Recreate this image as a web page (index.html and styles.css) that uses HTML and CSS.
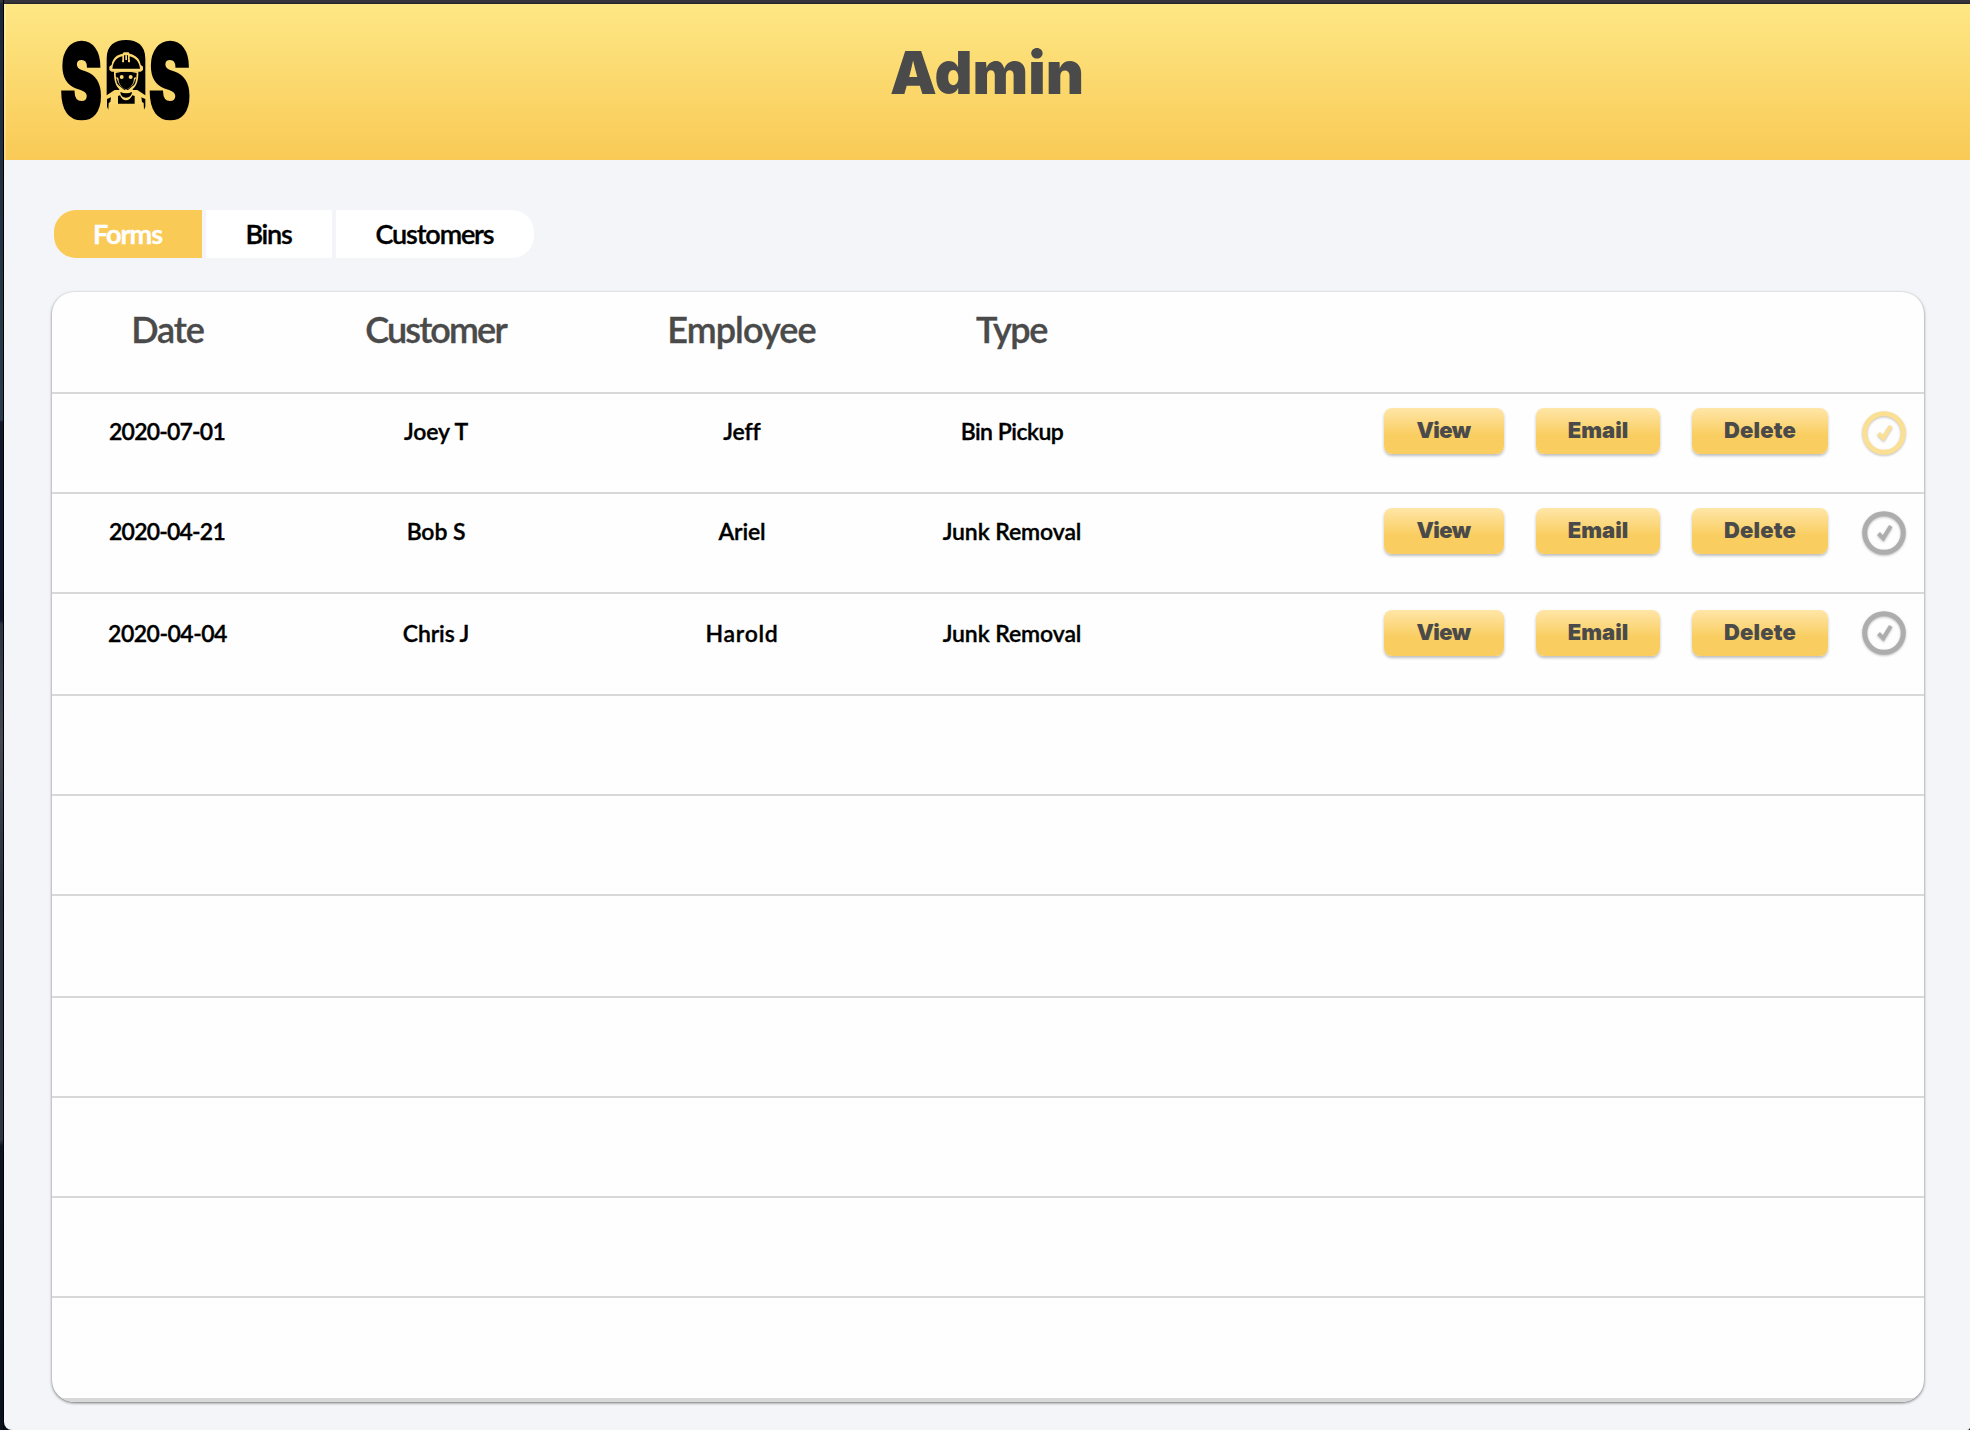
FILE: index.html
```
<!DOCTYPE html>
<html lang="en">
<head>
<meta charset="utf-8">
<title>Admin</title>
<link rel="stylesheet" href="styles.css">
</head>
<body>
<svg class="defs" aria-hidden="true">
  <symbol id="check" viewBox="0 0 44 44">
    <circle cx="22" cy="22" r="19.3" fill="none" stroke="currentColor" stroke-width="5"/>
    <path d="M16.5 22.5 L21.3 27.3 L28.8 15" fill="none" stroke="currentColor" stroke-width="4"/>
  </symbol>
</svg>
<div class="app">
  <header class="header">
    <svg class="logo" viewBox="0 0 420 276" role="img" aria-label="SOS">
      <g class="logo-letters">
        <text transform="translate(13 251) scale(.61 1)">S</text>
        <text transform="translate(278 251) scale(.61 1)">S</text>
      </g>
      <path d="M152 184V74C152 34 176 18 210 18S268 34 268 74V184L244 168H176Z"/>
      <path class="gold" d="M174 112C173 142 181 158 190 166V174L152 188L161 210H259L268 188L230 174V166C240 158 248 142 247 112Z"/>
      <path d="M179 117Q210 109 242 117C241 136 239 148 233 154L216 168H205L188 154C181 148 180 136 179 117Z"/>
      <path class="gold-line" d="M181 132Q186 131 188 142Q193 157 210 165Q228 157 233 142Q235 131 240 132"/>
      <path d="M188 117H233V141C230 153 221 164 210 166C199 164 191 153 188 141Z"/>
      <path class="gold" d="M160 108V98L167 92C170 71 183 62 200 59L203 55H218L221 59C239 63 251 73 254 92L261 98V108L254 113H167Z"/>
      <path d="M169 104C172 80 184 70 199 67V84H204V64H216V84H221V67C238 71 250 83 252 104Z"/>
      <path class="gold" d="M208 64H213V78H208ZM199 78H204V85H199ZM217 78H222V85H217Z"/>
      <circle class="gold" cx="197" cy="129" r="6"/>
      <circle class="gold" cx="224" cy="129" r="6"/>
      <path d="M193 174Q210 182 228 174C227 186 219 191 210 191S194 186 193 174Z"/>
      <path d="M186 186L192 184Q198 199 210 199T229 184L236 186V209H186Z"/>
      <path d="M153 195L165 190L163 204L158 207L157 227L153 218ZM268 195L256 190L258 204L263 207L264 227L268 218Z"/>
    </svg>
    <h1 class="title">Admin</h1>
  </header>

  <main class="main">
    <nav class="tabs">
      <a class="tab tab-forms active">Forms</a>
      <a class="tab tab-bins">Bins</a>
      <a class="tab tab-customers">Customers</a>
    </nav>

    <section class="card">
      <div class="row head">
        <span class="cell t-date">Date</span>
        <span class="cell t-customer">Customer</span>
        <span class="cell t-employee">Employee</span>
        <span class="cell t-type">Type</span>
      </div>
      <div class="row">
        <span class="cell date">2020-07-01</span>
        <span class="cell">Joey T</span>
        <span class="cell">Jeff</span>
        <span class="cell pickup">Bin Pickup</span>
        <div class="actions">
          <button class="btn view">View</button>
          <button class="btn email">Email</button>
          <button class="btn delete">Delete</button>
          <svg class="check pending"><use href="#check"/></svg>
        </div>
      </div>
      <div class="row">
        <span class="cell date">2020-04-21</span>
        <span class="cell">Bob S</span>
        <span class="cell">Ariel</span>
        <span class="cell">Junk Removal</span>
        <div class="actions">
          <button class="btn view">View</button>
          <button class="btn email">Email</button>
          <button class="btn delete">Delete</button>
          <svg class="check"><use href="#check"/></svg>
        </div>
      </div>
      <div class="row tall last-entry">
        <span class="cell date-wide">2020-04-04</span>
        <span class="cell">Chris J</span>
        <span class="cell harold">Harold</span>
        <span class="cell">Junk Removal</span>
        <div class="actions">
          <button class="btn view">View</button>
          <button class="btn email">Email</button>
          <button class="btn delete">Delete</button>
          <svg class="check"><use href="#check"/></svg>
        </div>
      </div>
      <div class="row"></div>
      <div class="row"></div>
      <div class="row tall"></div>
      <div class="row"></div>
      <div class="row"></div>
      <div class="row"></div>
      <div class="row bottom"></div>
    </section>
  </main>
</div>
</body>
</html>
```
FILE: styles.css
```
* { box-sizing: border-box; }

body {
  margin: 0;
  height: 1430px;
  padding: 4px 0 0 4px;
  overflow: hidden;
  background:
    linear-gradient(#000, #000) 3px 0 / 1px 100% no-repeat,
    linear-gradient(#35343c, #35343c 2px, #242329 4px) 0 0 / 100% 4px no-repeat,
    linear-gradient(#1c2536 0, #263746 300px, #2b3d4c 420px, #12182a 422px, #10162a 620px, #2c3440 624px, #444954 740px, #272e3a 900px, #303642 1140px, #0d1522 1146px, #0a111c 100%);
  font-family: Lato, sans-serif;
}

.defs { position: absolute; width: 0; height: 0; }

.app {
  height: 1426px;
  background: #f3f5f9;
  border-radius: 0 0 3px 8px;
  overflow: hidden;
}

.header {
  display: grid;
  grid-template-columns: 1fr auto 1fr;
  align-items: start;
  height: 156px;
  padding: 30px 0 0 52px;
  background: linear-gradient(#fee785, #f9ca56);
  box-shadow: inset 2px 0 rgba(255, 255, 255, .25);
}

.logo { width: 140px; height: 92px; overflow: visible; }
.logo-letters {
  font: 900 308px/1 Inter, sans-serif;
  stroke: #000;
  stroke-width: 8;
}
.gold { fill: #fbd96f; }
.gold-line { fill: none; stroke: #fbd96f; stroke-width: 5; }

.title {
  margin: 3px 52px 0 0;
  font: 900 59px/72px Inter, sans-serif;
  color: #4a4a4a;
}

.main { padding: 50px 46px 0 48px; }

.tabs { display: flex; gap: 4px; margin: 0 0 34px 2px; }
.tab {
  height: 48px;
  padding-right: 1px;
  background: #fff;
  color: #000;
  font-size: 27px;
  font-weight: 600;
  line-height: 48px;
  text-align: center;
  -webkit-text-stroke: .35px currentColor;
}
.tab-forms { width: 148px; border-radius: 22px 0 0 22px; font-weight: 700; letter-spacing: -1px; }
.tab-bins { width: 126px; letter-spacing: -1.2px; }
.tab-customers { width: 198px; border-radius: 0 22px 22px 0; letter-spacing: -1.15px; }
.tab.active { background: #f9ca56; color: #fff; }

.card {
  border-radius: 22px;
  background: #fefefe;
  box-shadow: 0 1px 3px rgba(0, 0, 0, .55);
  overflow: hidden;
}
.row {
  display: grid;
  grid-template-columns: 232px 304px 308px 232px 1fr;
  align-items: start;
  height: 100px;
  border-bottom: 2px solid #d8d8d8;
  font-size: 23px;
  font-weight: 600;
}
.head { height: 102px; font-size: 36px; color: #4a4a4a; }
.tall { height: 102px; }
.bottom { height: 104px; border-bottom-width: 4px; }

.cell {
  padding-top: 17px;
  line-height: 40px;
  letter-spacing: -.1px;
  text-align: center;
  -webkit-text-stroke: .35px currentColor;
}
.head .cell { padding: 12px 1px 0 0; line-height: 50px; }
.last-entry .cell { padding-top: 19px; }
.row .t-date { letter-spacing: -1.1px; }
.row .t-customer { letter-spacing: -1.85px; }
.row .t-employee { letter-spacing: -.9px; }
.row .t-type { letter-spacing: -1.4px; }
.date { padding-right: 2px; letter-spacing: -.8px; }
.date-wide { padding-right: 1px; letter-spacing: -.5px; }
.pickup { letter-spacing: -.5px; }
.harold { letter-spacing: .7px; }

.actions {
  display: flex;
  justify-content: flex-end;
  padding: 14px 18px 0 0;
}
.last-entry .actions { padding-top: 16px; }
.last-entry .check { margin-top: 1px; }
.btn {
  height: 46px;
  padding: 0 0 2px;
  border: 0;
  border-radius: 8px;
  background: linear-gradient(#ffe6a8, #f9cd5f 60%);
  box-shadow: 0 2px 3px rgba(0, 0, 0, .25);
  font: 900 22px/44px Inter, sans-serif;
  color: #4a4a4a;
}
.view { width: 120px; padding-right: 1px; letter-spacing: -.6px; }
.email { width: 124px; margin-left: 32px; }
.delete { width: 136px; margin-left: 32px; letter-spacing: .2px; }
.check {
  width: 44px;
  height: 44px;
  margin: 3px 0 0 34px;
  color: #adadad;
  filter: drop-shadow(0 1px 1px rgba(0, 0, 0, .25));
}
.check.pending { color: #fbdf93; }
```
